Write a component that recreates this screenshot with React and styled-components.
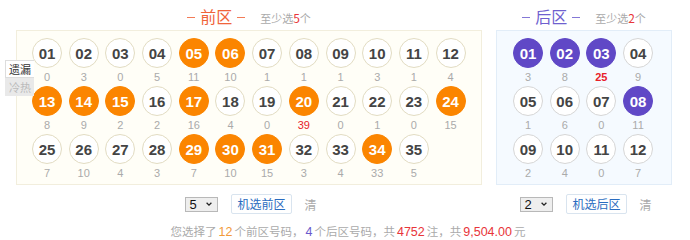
import React from "react";
import styled, { createGlobalStyle } from "styled-components";

const Global = createGlobalStyle`
  html, body { margin: 0; padding: 0; background: #fff; }
  body { font-family: "Liberation Sans", "Noto Sans CJK SC", Arial, sans-serif; }
`;

const Page = styled.div`
  width: 690px;
  height: 240px;
  position: relative;
  overflow: hidden;
`;

const Zones = styled.div`
  display: flex;
  gap: 14px;
  padding-left: 16px;
`;

const Zone = styled.div`
  width: ${(p) => p.$w}px;
  display: flex;
  flex-direction: column;
  position: relative;
`;

const TitleRow = styled.div`
  height: 30px;
  display: flex;
  align-items: center;
  justify-content: center;
  gap: 15px;
`;

const Title = styled.div`
  font-family: "Noto Sans CJK SC", sans-serif;
  font-size: 16px;
  color: ${(p) => p.$c};
  line-height: 20px;
  display: flex;
  align-items: center;
  gap: 5px;
  position: relative;
  top: 1px;
`;

const Dash = styled.span`
  display: inline-block;
  width: 8px;
  height: 1px;
  background: currentColor;
  opacity: 0.85;
  position: relative;
  top: 1px;
`;

const Hint = styled.div`
  font-family: "Noto Sans CJK SC", sans-serif;
  font-size: 11px;
  color: #aaa;
  position: relative;
  top: 2px;
  b { font-weight: normal; color: #e8353a; font-size: 12px; }
`;

const Panel = styled.div`
  background: ${(p) => p.$bg};
  border: 1px solid ${(p) => p.$bd};
  padding: 7px 0 2px ${(p) => p.$pl}px;
  display: grid;
  grid-template-columns: repeat(${(p) => p.$cols}, 30px);
  column-gap: 6.7px;
  height: 155px;
  box-sizing: border-box;
  align-content: start;
`;

const Cell = styled.div`
  display: flex;
  flex-direction: column;
  align-items: center;
  height: 48px;
`;

const Ball = styled.div`
  width: 30px;
  height: 30px;
  border-radius: 50%;
  box-sizing: border-box;
  display: flex;
  align-items: center;
  justify-content: center;
  font-family: "Liberation Sans", Arial, sans-serif;
  font-weight: bold;
  font-size: 15px;
  color: ${(p) => (p.$on ? "#fff" : "#444")};
  background: ${(p) => (p.$on ? p.$color : "#fff")};
  border: 1px solid ${(p) => (p.$on ? p.$color : p.$ring)};
`;

const Miss = styled.div`
  font-family: "Liberation Sans", Arial, sans-serif;
  font-size: 11px;
  line-height: 18px;
  color: ${(p) => (p.$hot ? "#e8202a" : "#aaa")};
  font-weight: ${(p) => (p.$hot && p.$bold ? "bold" : "normal")};
`;

const Tabs = styled.div`
  position: absolute;
  left: -11px;
  top: 60px;
  display: flex;
  flex-direction: column;
`;

const Tab = styled.div`
  width: 28px;
  height: 16px;
  font-family: "Noto Sans CJK SC", sans-serif;
  font-size: 11px;
  line-height: 16px;
  text-align: center;
  color: ${(p) => (p.$on ? "#333" : "#bbb")};
  background: ${(p) => (p.$on ? "#fff" : "#e9e9e9")};
  border: 1px solid ${(p) => (p.$on ? "#ddd" : "#e9e9e9")};
  border-right: none;
`;

const Controls = styled.div`
  height: 38px;
  display: flex;
  align-items: center;
  justify-content: center;
  gap: 13px;
  padding-left: 4px;
`;

const Select = styled.div`
  width: 33px;
  height: 15px;
  box-sizing: border-box;
  border: 1px solid #b8b8b8;
  background: #eeeeee;
  display: flex;
  align-items: center;
  justify-content: space-between;
  padding: 0 4px 0 3px;
  font-family: "Liberation Sans", Arial, sans-serif;
  font-size: 13px;
  color: #111;
  svg { width: 8px; height: 8px; }
`;

const Pick = styled.div`
  height: 18px;
  padding: 0 5px;
  border: 1px solid #d9e4ef;
  border-radius: 2px;
  background: #fff;
  color: #2a6cc0;
  font-family: "Noto Sans CJK SC", sans-serif;
  font-size: 12px;
  line-height: 18px;
`;

const Clear = styled.div`
  font-family: "Noto Sans CJK SC", sans-serif;
  font-size: 12px;
  color: #aaa;
`;

const Summary = styled.div`
  position: absolute;
  left: 0;
  right: 0;
  top: 223px;
  text-align: center;
  font-family: "Noto Sans CJK SC", sans-serif;
  font-size: 11.5px;
  color: #aaa;
  padding-left: 6px;
`;

const Num = styled.span`
  font-family: "Liberation Sans", Arial, sans-serif;
  font-size: 12.5px;
  color: ${(p) => p.$c};
  margin: 0 2px;
`;

const Chevron = () => (
  <svg viewBox="0 0 10 10">
    <path d="M2 3.5 L5 6.5 L8 3.5" fill="none" stroke="#222" strokeWidth="1.6" />
  </svg>
);

const pad = (n) => String(n).padStart(2, "0");

const frontMiss = [0,3,0,5,11,10,1,1,1,3,1,4, 8,9,2,2,16,4,0,39,0,1,0,15, 7,10,4,3,7,10,15,3,4,33,5];
const frontOn = [5,6,13,14,15,17,20,24,29,30,31,34];
const backMiss = [3,8,25,9, 1,6,0,11, 2,4,0,7];
const backOn = [1,2,3,8];

function Grid({ count, miss, on, hot, bold, color, ring, cols, bg, bd, pl }) {
  return (
    <Panel $cols={cols} $bg={bg} $bd={bd} $pl={pl}>
      {Array.from({ length: count }, (_, i) => i + 1).map((n) => (
        <Cell key={n}>
          <Ball $on={on.includes(n)} $color={color} $ring={ring}>{pad(n)}</Ball>
          <Miss $hot={miss[n - 1] === hot} $bold={bold}>{miss[n - 1]}</Miss>
        </Cell>
      ))}
    </Panel>
  );
}

export default function App() {
  return (
    <Page>
      <Global />
      <Zones>
        <Zone $w={466}>
          <TitleRow>
            <Title $c="#f0643a"><Dash />前区<Dash /></Title>
            <Hint>至少选<b>5</b>个</Hint>
          </TitleRow>
          <Grid count={35} miss={frontMiss} on={frontOn} hot={39} color="#fb8500" ring="#e2dcc2" cols={12} bg="#fffef7" bd="#f2eedd" pl={15} />
          <Tabs>
            <Tab $on>遗漏</Tab>
            <Tab>冷热</Tab>
          </Tabs>
          <Controls>
            <Select>5<Chevron /></Select>
            <Pick>机选前区</Pick>
            <Clear>清</Clear>
          </Controls>
        </Zone>
        <Zone $w={176}>
          <TitleRow>
            <Title $c="#6f5fcf"><Dash />后区<Dash /></Title>
            <Hint>至少选<b>2</b>个</Hint>
          </TitleRow>
          <Grid count={12} miss={backMiss} on={backOn} hot={25} bold color="#6048c6" ring="#d6d6d6" cols={4} bg="#f5faff" bd="#e2edf8" pl={16} />
          <Controls>
            <Select>2<Chevron /></Select>
            <Pick>机选后区</Pick>
            <Clear>清</Clear>
          </Controls>
        </Zone>
      </Zones>
      <Summary>
        您选择了<Num $c="#f29a3a">12</Num>个前区号码，<Num $c="#6a5acd">4</Num>个后区号码，共<Num $c="#e8353a">4752</Num>注，共<Num $c="#e8353a">9,504.00</Num>元
      </Summary>
    </Page>
  );
}
